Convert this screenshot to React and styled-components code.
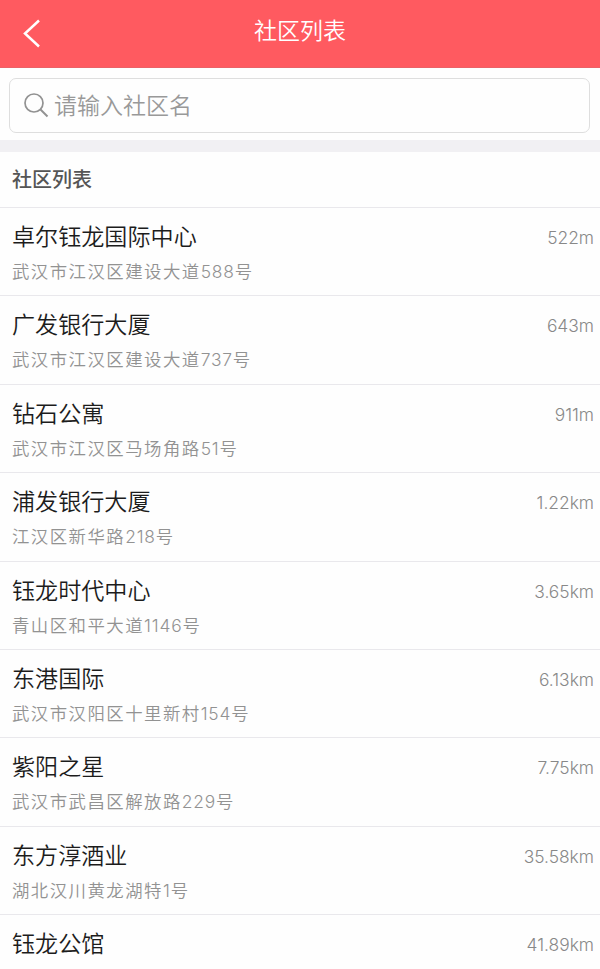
import React from 'react'
import styled, { createGlobalStyle } from 'styled-components'

const colors = {
  header: '#ff5a60',
  line: '#e9e8ec',
  title: '#1c1c1c',
  gray: '#929292'
}

const GlobalStyle = createGlobalStyle`
  * {
    box-sizing: border-box;
  }

  body {
    margin: 0;
    background: #fefefe;
    font-family: 'Inter', 'Noto Sans CJK SC', sans-serif;
  }
`

const Page = styled.div`
  height: 969px;
  overflow: hidden;
`

const Header = styled.header`
  height: 68px;
  padding: 0 22px;
  display: grid;
  grid-template-columns: 20px 1fr 20px;
  align-items: center;
  border-bottom: 1px solid #ea6267;
  background: ${colors.header};
  color: #ffffff;
`

const BackButton = styled.button`
  height: 30px;
  padding: 0;
  border: none;
  background: none;
  color: inherit;

  svg {
    display: block;
  }
`

const HeaderTitle = styled.h1`
  margin: 0;
  padding-bottom: 5px;
  font-size: 23px;
  font-weight: 350;
  line-height: 34px;
  text-align: center;
`

const SearchBar = styled.div`
  height: 72px;
  padding: 10px 10px 0 9px;
`

const SearchBox = styled.div`
  height: 55px;
  padding-left: 13px;
  display: flex;
  align-items: center;
  border: 1.5px solid #dedede;
  border-radius: 7px;
  color: ${colors.gray};

  svg {
    margin-bottom: 2px;
  }
`

const Placeholder = styled.span`
  padding-left: 5px;
  color: #999999;
  font-size: 23px;
  font-weight: 350;
  line-height: 34px;
`

const SectionTitle = styled.h2`
  height: 68px;
  margin: 0;
  padding: 1px 0 0 12px;
  border-top: 12px solid #f1f0f3;
  border-bottom: 1px solid ${colors.line};
  color: #555555;
  font-size: 20px;
  font-weight: 500;
  line-height: 54px;
`

const List = styled.ul`
  margin: 0;
  padding: 0;
  list-style: none;
`

const Row = styled.li`
  height: 88.4px;
  padding: 11px 6px 0 12px;
  display: flex;
  justify-content: space-between;
  border-bottom: 1px solid ${colors.line};
`

const Name = styled.div`
  color: ${colors.title};
  font-size: 23.1px;
  font-weight: 350;
  line-height: 37px;
`

const Address = styled.div`
  margin-top: 3px;
  color: ${colors.gray};
  font-size: 17.4px;
  font-weight: 350;
  line-height: 26px;
  letter-spacing: 1.48px;
`

const StreetNumber = styled.span`
  font-weight: 300;
  letter-spacing: 0.8px;
`

const Distance = styled.div`
  color: #888888;
  font-size: 17.4px;
  font-weight: 300;
  line-height: 37px;
`

const communities = [
  { name: '卓尔钰龙国际中心', street: '武汉市江汉区建设大道', number: '588', distance: '522m' },
  { name: '广发银行大厦', street: '武汉市江汉区建设大道', number: '737', distance: '643m' },
  { name: '钻石公寓', street: '武汉市江汉区马场角路', number: '51', distance: '911m' },
  { name: '浦发银行大厦', street: '江汉区新华路', number: '218', distance: '1.22km' },
  { name: '钰龙时代中心', street: '青山区和平大道', number: '1146', distance: '3.65km' },
  { name: '东港国际', street: '武汉市汉阳区十里新村', number: '154', distance: '6.13km' },
  { name: '紫阳之星', street: '武汉市武昌区解放路', number: '229', distance: '7.75km' },
  { name: '东方淳酒业', street: '湖北汉川黄龙湖特', number: '1', distance: '35.58km' },
  { name: '钰龙公馆', distance: '41.89km' }
]

export default function App() {
  return (
    <Page>
      <GlobalStyle />
      <Header>
        <BackButton aria-label="返回">
          <svg width="20" height="30" viewBox="0 0 20 30" fill="none">
            <path d="M17 1.5L3 14.5L17 27.5" stroke="currentColor" strokeWidth="2.5" />
          </svg>
        </BackButton>
        <HeaderTitle>社区列表</HeaderTitle>
      </Header>
      <SearchBar>
        <SearchBox>
          <svg width="26" height="26" viewBox="0 0 26 26" fill="none" stroke="currentColor">
            <circle cx="11" cy="11" r="9" strokeWidth="1.7" />
            <path d="M17.5 17.5L24.5 24.5" strokeWidth="2" />
          </svg>
          <Placeholder>请输入社区名</Placeholder>
        </SearchBox>
      </SearchBar>
      <SectionTitle>社区列表</SectionTitle>
      <List>
        {communities.map(item => (
          <Row key={item.name}>
            <div>
              <Name>{item.name}</Name>
              {item.street && (
                <Address>
                  {item.street}
                  <StreetNumber>{item.number}</StreetNumber>号
                </Address>
              )}
            </div>
            <Distance>{item.distance}</Distance>
          </Row>
        ))}
      </List>
    </Page>
  )
}
